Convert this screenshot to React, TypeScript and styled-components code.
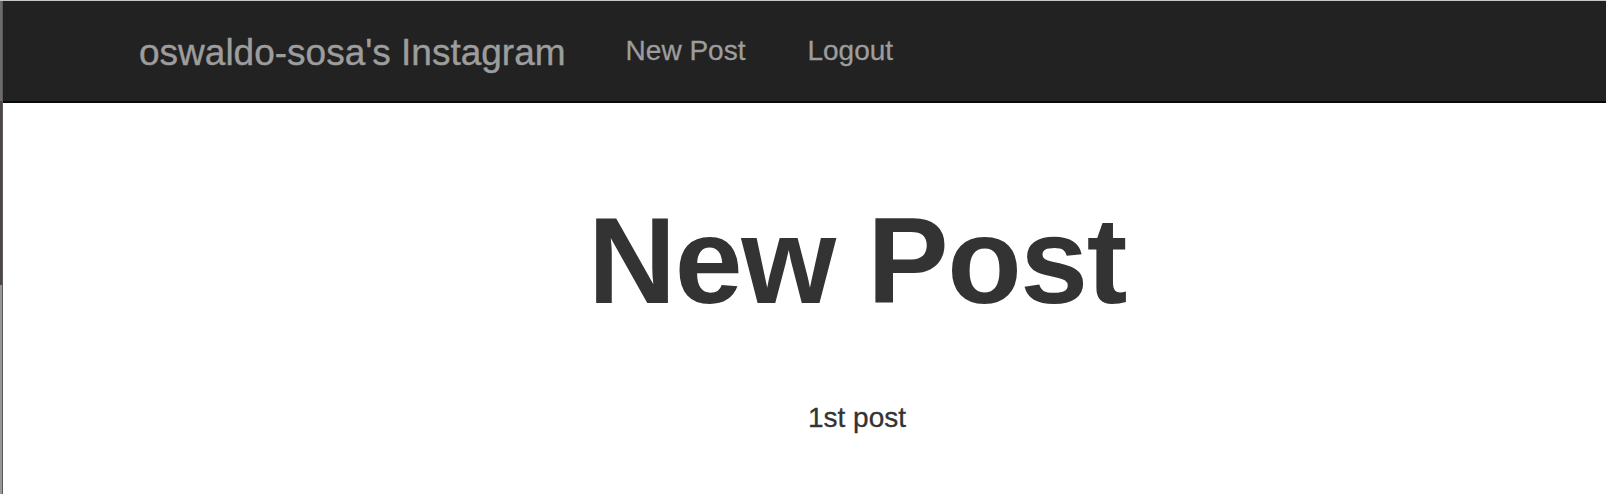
import React from "react";
import styled, { createGlobalStyle } from "styled-components";

const GlobalStyle = createGlobalStyle`
  html, body { margin: 0; padding: 0; background: #fff; }
  body { font-family: "Liberation Sans", Arial, Helvetica, sans-serif; color: #333; }
  * { box-sizing: border-box; }
`;

const Frame = styled.div`
  display: flex;
  width: 1606px;
  height: 494px;
  border-top: 1px solid #c8c8c8;
  overflow: hidden;
`;

const EdgeStrip = styled.div`
  flex: 0 0 3px;
  background: linear-gradient(
    to bottom,
    #6e6a6e 0px,
    #6e6a6e 100px,
    #4d454b 100px,
    #4d454b 284px,
    #979797 284px,
    #979797 100%
  );
  border-right: 1px solid #5a5a5a;
`;

const Page = styled.div`
  flex: 1;
  display: flex;
  flex-direction: column;
  min-width: 0;
`;

const NavBar = styled.nav`
  display: flex;
  align-items: center;
  height: 102px;
  padding-left: 136px;
  background: #222;
  border-bottom: 2px solid #080808;
`;

const Brand = styled.a`
  font-size: 37px;
  color: #9d9d9d;
  text-decoration: none;
  margin-right: 60px;
  line-height: 1;
  padding-top: 2px;
  -webkit-text-stroke: 0.4px #9d9d9d;
`;

const NavLink = styled.a<{ $gap?: number }>`
  font-size: 28px;
  color: #9d9d9d;
  text-decoration: none;
  line-height: 1;
  margin-right: ${(p) => p.$gap ?? 0}px;
  -webkit-text-stroke: 0.3px #9d9d9d;
`;

const Main = styled.main`
  display: flex;
  flex-direction: column;
  padding-left: 105px;
`;

const Title = styled.h1`
  margin: 92px 0 0;
  text-align: center;
  font-size: 122px;
  font-weight: 700;
  line-height: 132px;
  letter-spacing: -1.4px;
  color: #333;
`;

const Caption = styled.p`
  margin: 71px 0 0;
  text-align: center;
  font-size: 28px;
  line-height: 40px;
  color: #333;
  -webkit-text-stroke: 0.3px #333;
`;

export default function App() {
  return (
    <>
      <GlobalStyle />
      <Frame>
        <EdgeStrip />
        <Page>
          <NavBar>
            <Brand href="#">oswaldo-sosa's Instagram</Brand>
            <NavLink href="#" $gap={62}>New Post</NavLink>
            <NavLink href="#">Logout</NavLink>
          </NavBar>
          <Main>
            <Title>New Post</Title>
            <Caption>1st post</Caption>
          </Main>
        </Page>
      </Frame>
    </>
  );
}
